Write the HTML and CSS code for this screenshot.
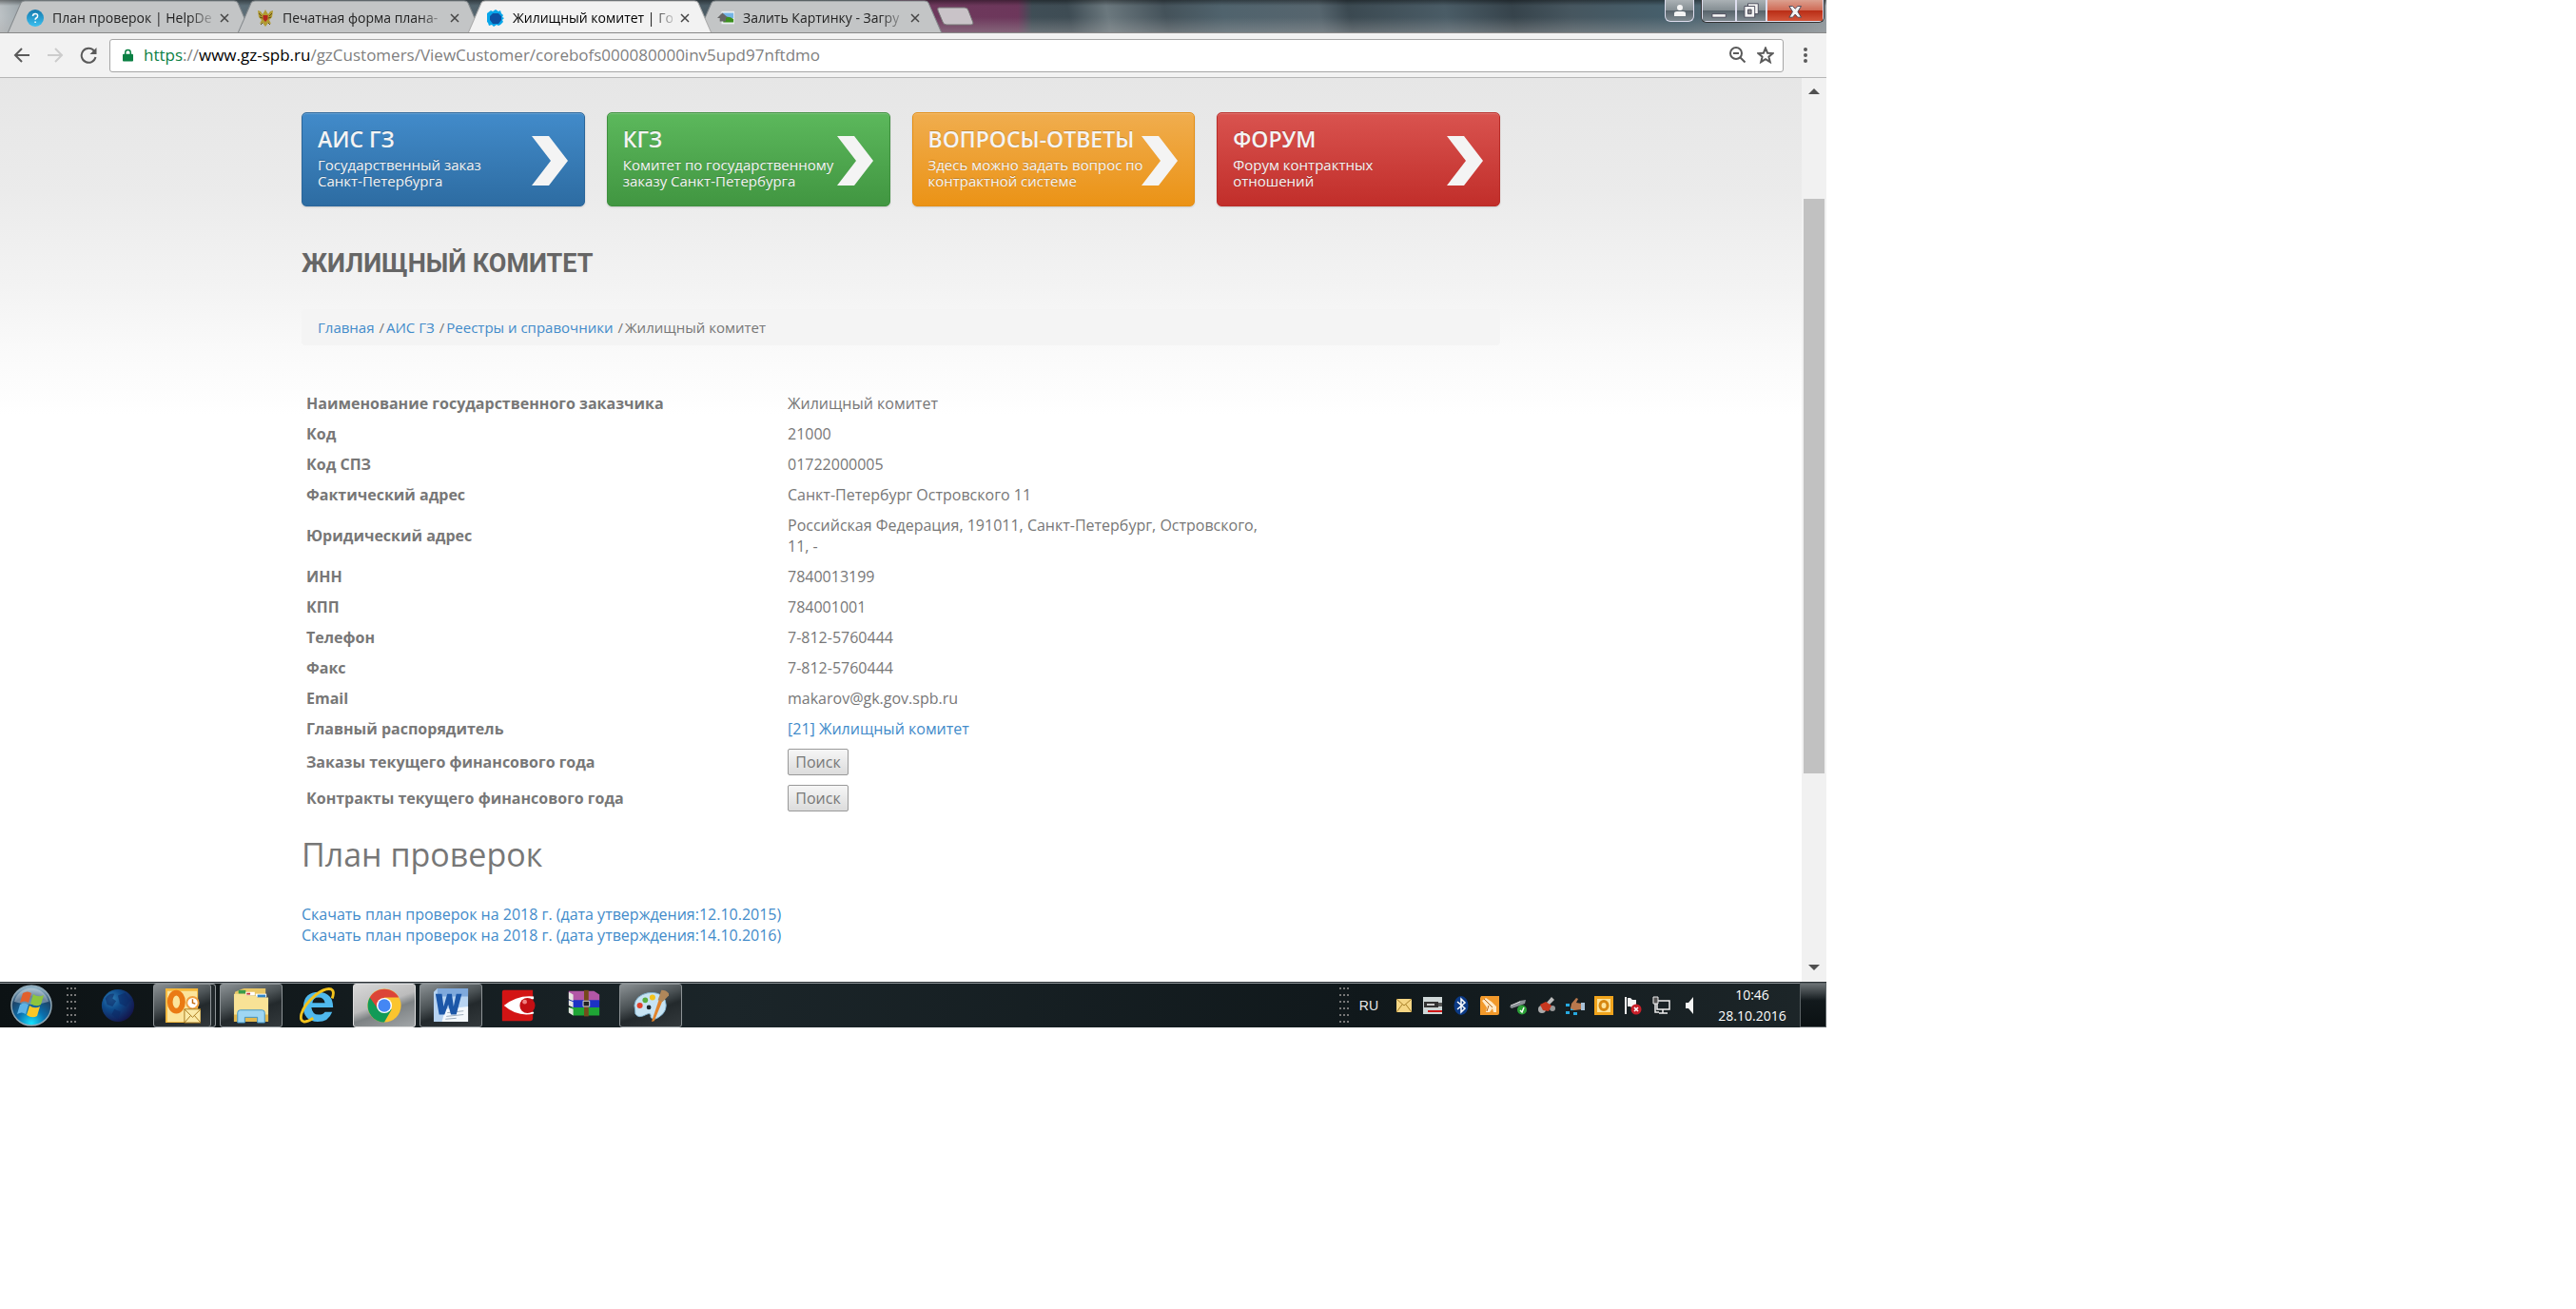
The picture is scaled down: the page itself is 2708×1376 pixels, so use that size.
FILE: index.html
```html
<!DOCTYPE html>
<html lang="ru">
<head>
<meta charset="utf-8">
<title>Жилищный комитет</title>
<link rel="stylesheet" href="styles.css">
</head>
<body>
<div class="screen">
  <header class="tabstrip">
    <nav class="tabs" aria-label="Вкладки">
      <div class="tab">
        <svg class="tab-shape" viewBox="0 0 256 34" preserveAspectRatio="none"><path d="M0 34L14 3Q15 1 18 1H238Q241 1 242 3L256 34" /></svg>
        <svg class="fav" viewBox="0 0 18 18"><defs><linearGradient id="q" x1="0" y1="0" x2="0" y2="1"><stop offset="0" stop-color="#1479ad"/><stop offset="1" stop-color="#3cc0f0"/></linearGradient></defs><circle cx="9" cy="9" r="9" fill="url(#q)"/><path d="M6.5 7q0-2.600 2.600-2.600t2.500 2.300q0 1.500-1.500 2.300-1 .6-1 1.800M9.100 12.400v1.600" fill="none" stroke="#fff" stroke-width="1.500"/></svg>
        <span class="tab-title">План проверок | HelpDe</span>
        <button class="tab-x" aria-label="Закрыть"><svg viewBox="0 0 10 10"><path d="M1 1l8 8M9 1l-8 8"/></svg></button>
      </div>
      <div class="tab">
        <svg class="tab-shape" viewBox="0 0 256 34" preserveAspectRatio="none"><path d="M0 34L14 3Q15 1 18 1H238Q241 1 242 3L256 34" /></svg>
        <svg class="fav" viewBox="0 0 18 18"><path d="M1 1l3 1 2 3 2-3 1-2 1 2 2 3 2-3 3-1-1 7-3 3 2 4-3-1-3 4-3-4-3 1 2-4-3-3z" fill="#b09a32"/><path d="M2 4l3 3M3 8l3 1M16 4l-3 3M15 8l-3 1M4 16l2-2M14 16l-2-2" stroke="#5f4c16"/><path d="M6.500 6h5v4l-2.500 3-2.500-3z" fill="#b3261e"/></svg>
        <span class="tab-title">Печатная форма плана-</span>
        <button class="tab-x" aria-label="Закрыть"><svg viewBox="0 0 10 10"><path d="M1 1l8 8M9 1l-8 8"/></svg></button>
      </div>
      <div class="tab tab-active">
        <svg class="tab-shape" viewBox="0 0 256 34" preserveAspectRatio="none"><path d="M0 34L14 3Q15 1 18 1H238Q241 1 242 3L256 34" /></svg>
        <svg class="fav" viewBox="1 0 18 18"><path d="M5 1l2 1 3-2 3 2 2-1 1 3 2 2-1 2 2 1-2 2 1 2-3 3-2 1-2-1-3 2-2-2-3 1-1-3-2-2 1-2-2-2 2-1 0-3z" fill="#08a6ea"/><path d="M7 4h6l3 3v4l-3 4H7l-3-4V7z" fill="#0c50a2"/></svg>
        <span class="tab-title">Жилищный комитет | Го</span>
        <button class="tab-x" aria-label="Закрыть"><svg viewBox="0 0 10 10"><path d="M1 1l8 8M9 1l-8 8"/></svg></button>
      </div>
      <div class="tab">
        <svg class="tab-shape" viewBox="0 0 256 34" preserveAspectRatio="none"><path d="M0 34L14 3Q15 1 18 1H238Q241 1 242 3L256 34" /></svg>
        <svg class="fav" viewBox="0 0 20 18"><path d="M5 1h15v15H5z" fill="#e9eef0"/><path d="M6 3h13v6H6z" fill="#74b4e6"/><path d="M7 9q6-3 12 1v4H7z" fill="#3c8f1d"/><path d="M6 3l6 5-2 1v4H3V9H0z" fill="#666"/></svg>
        <span class="tab-title">Залить Картинку - Загру</span>
        <button class="tab-x" aria-label="Закрыть"><svg viewBox="0 0 10 10"><path d="M1 1l8 8M9 1l-8 8"/></svg></button>
      </div>
      <button class="newtab" aria-label="Новая вкладка"><svg viewBox="0 0 42 20"><path d="M3 1h27q3 0 4 3l5 13q0 2-2 2H11q-3 0-4-3L2 4Q1 1 3 1z"/></svg></button>
    </nav>
    <div class="winbtns">
      <button class="wb wb-user" aria-label="Профиль"><svg viewBox="0 0 12 12"><circle cx="6" cy="3" r="3"/><path d="M0 12V9q0-2 3-2h6q3 0 3 2v3z"/></svg></button>
      <div class="wb-group">
        <button class="wb wb-min" aria-label="Свернуть"><svg viewBox="0 0 18 20"><path d="M1 14h16v4H1z" stroke="#445"/></svg></button>
        <button class="wb wb-max" aria-label="Развернуть"><svg viewBox="0 0 18 20"><path d="M5 2h12v12H5z" stroke="#445"/><path d="M1 5h12v13H1z" stroke="#445"/><path d="M5 9h4v5H5z" fill="#888" stroke="#445"/></svg></button>
        <button class="wb wb-close" aria-label="Закрыть окно"><svg viewBox="0 0 16 20"><path d="M1 5h4l3 3 3-3h4l-4 6.500 4 6.500h-4l-3-3.500L5 18H1l4-6.500z" stroke="#445"/></svg></button>
      </div>
    </div>
  </header>

  <div class="toolbar">
    <button class="tool" aria-label="Назад"><svg viewBox="0 0 18 18"><path d="M17 9H2M9 2L2 9l7 7"/></svg></button>
    <button class="tool tool-off" aria-label="Вперёд"><svg viewBox="0 0 18 18"><path d="M1 9h15M9 2l7 7-7 7"/></svg></button>
    <button class="tool" aria-label="Обновить"><svg viewBox="0 0 18 18"><path d="M15 4.500A7.500 7.500 0 1 0 16.500 11"/><path d="M17.500 1v7h-7z" fill="#5a5a5a" stroke="none"/></svg></button>
    <div class="omnibox">
      <svg class="lock" viewBox="0 0 12 14"><path d="M1 5.500h10q1 0 1 1V13q0 1-1 1H1q-1 0-1-1V6.500q0-1 1-1z" fill="#0b8043"/><path d="M3 6V4q0-3 3-3t3 3v2" fill="none" stroke="#0b8043" stroke-width="1.600"/></svg>
      <p class="url"><span class="url-s">https</span>://<span class="url-h">www.gz-spb.ru</span>/gzCustomers/ViewCustomer/corebofs000080000inv5upd97nftdmo</p>
      <svg class="omni-ico" viewBox="0 0 18 18"><circle cx="7" cy="7" r="6"/><path d="M4 7h6M11.500 11.500l5 5"/></svg>
      <svg class="omni-ico" viewBox="0 0 18 18"><path d="M9 1.500l2.100 5.200 5.600.4-4.300 3.600 1.400 5.500L9 13.200l-4.800 3 1.400-5.500L1.300 7.100l5.600-.4z"/></svg>
    </div>
    <button class="menu" aria-label="Меню"><svg viewBox="0 0 4 18"><circle cx="2" cy="3" r="2"/><circle cx="2" cy="9" r="2"/><circle cx="2" cy="15" r="2"/></svg></button>
  </div>

  <div class="viewport">
    <main class="page">
      <div class="cards">
        <a class="card card-blue" href="#"><span class="card-title">АИС ГЗ</span><span class="card-text">Государственный заказ<br>Санкт-Петербурга</span><svg class="chev" viewBox="0 0 40 52"><path d="M1 0h18l20 26-20 26H1l20-26z"/></svg></a>
        <a class="card card-green" href="#"><span class="card-title">КГЗ</span><span class="card-text">Комитет по государственному<br>заказу Санкт-Петербурга</span><svg class="chev" viewBox="0 0 40 52"><path d="M1 0h18l20 26-20 26H1l20-26z"/></svg></a>
        <a class="card card-orange" href="#"><span class="card-title">ВОПРОСЫ-ОТВЕТЫ</span><span class="card-text">Здесь можно задать вопрос по<br>контрактной системе</span><svg class="chev" viewBox="0 0 40 52"><path d="M1 0h18l20 26-20 26H1l20-26z"/></svg></a>
        <a class="card card-red" href="#"><span class="card-title">ФОРУМ</span><span class="card-text">Форум контрактных<br>отношений</span><svg class="chev" viewBox="0 0 40 52"><path d="M1 0h18l20 26-20 26H1l20-26z"/></svg></a>
      </div>
      <h1 class="title">ЖИЛИЩНЫЙ КОМИТЕТ</h1>
      <nav class="crumbs" aria-label="Навигация">
        <a href="#">Главная</a><span class="sep">/</span><a href="#">АИС ГЗ</a><span class="sep">/</span><a href="#">Реестры и справочники</a><span class="sep">/</span><span>Жилищный комитет</span>
      </nav>
      <table class="info">
        <tr><th scope="row">Наименование государственного заказчика</th><td>Жилищный комитет</td></tr>
        <tr><th scope="row">Код</th><td>21000</td></tr>
        <tr><th scope="row">Код СПЗ</th><td>01722000005</td></tr>
        <tr><th scope="row">Фактический адрес</th><td>Санкт-Петербург Островского 11</td></tr>
        <tr><th scope="row">Юридический адрес</th><td>Российская Федерация, 191011, Санкт-Петербург, Островского, 11, -</td></tr>
        <tr><th scope="row">ИНН</th><td>7840013199</td></tr>
        <tr><th scope="row">КПП</th><td>784001001</td></tr>
        <tr><th scope="row">Телефон</th><td>7-812-5760444</td></tr>
        <tr><th scope="row">Факс</th><td>7-812-5760444</td></tr>
        <tr><th scope="row">Email</th><td>makarov@gk.gov.spb.ru</td></tr>
        <tr><th scope="row">Главный распорядитель</th><td><a href="#">[21] Жилищный комитет</a></td></tr>
        <tr><th scope="row">Заказы текущего финансового года</th><td><button class="find">Поиск</button></td></tr>
        <tr><th scope="row">Контракты текущего финансового года</th><td><button class="find">Поиск</button></td></tr>
      </table>
      <h2 class="subtitle">План проверок</h2>
      <div class="downloads">
        <a href="#">Скачать план проверок на 2018 г. (дата утверждения:12.10.2015)</a>
        <a href="#">Скачать план проверок на 2018 г. (дата утверждения:14.10.2016)</a>
      </div>
    </main>
    <div class="scrollbar">
      <svg class="arr" viewBox="0 0 12 6"><path d="M0 6l6-6 6 6z"/></svg>
      <div class="track"><div class="thumb"></div></div>
      <svg class="arr" viewBox="0 0 12 6"><path d="M0 0l6 6 6-6z"/></svg>
    </div>
  </div>

  <footer class="taskbar">
    <button class="start" aria-label="Пуск"><svg viewBox="0 0 44 44"><defs><radialGradient id="orb" cx=".5" cy=".95" r=".9"><stop offset="0" stop-color="#16e4ff"/><stop offset=".4" stop-color="#0b6fae"/><stop offset=".75" stop-color="#1d4468"/><stop offset="1" stop-color="#8fb2c6"/></radialGradient></defs><circle cx="22" cy="22" r="21" fill="url(#orb)" stroke="#8fa7b5" stroke-width="1.500"/><path d="M4 18A18.500 18.500 0 0 1 40 18Q22 24 4 18z" fill="#fff" opacity=".35"/><path d="M13 9q5-3 9 0l-3 10q-4-3-9 0z" fill="#e2602c"/><path d="M24 10q5 4 11 1l-3 10q-5 3-11-1z" fill="#8dc53e"/><path d="M10 21q4-3 9 0l-3 10q-4-3-9 0z" fill="#5db2e6"/><path d="M20 22q5 4 11 1l-3 10q-5 3-11-1z" fill="#fbc727"/></svg></button>
    <div class="grip"></div>
    <div class="apps">
      <button class="app" aria-label="Глобус"><svg viewBox="0 0 40 40"><defs><radialGradient id="gl" cx=".3" cy=".3" r=".8"><stop offset="0" stop-color="#2f7fb6"/><stop offset=".4" stop-color="#0e4a8a"/><stop offset="1" stop-color="#141247"/></radialGradient></defs><circle cx="20" cy="20" r="18" fill="url(#gl)"/><path d="M6 12q4-6 10-5l-2 5 4 3-4 6-6-2zM20 9l8-3 6 8-5 7-7-3zM16 24l7 3-3 8-7-5z" fill="#0b2a66" opacity=".6"/></svg></button>
      <button class="app app-open app-stack" aria-label="Outlook"><svg viewBox="0 0 40 40"><path d="M1 1h36v38H1z" fill="#f6b83a"/><path d="M3 4h33v34H3z" fill="#fbe49c"/><ellipse cx="13" cy="16" rx="7" ry="10" fill="none" stroke="#ea7a14" stroke-width="6"/><circle cx="31" cy="17" r="6.500" fill="#fff" stroke="#f0a040" stroke-width="2"/><path d="M31 13v4l3 1" fill="none" stroke="#c46a10" stroke-width="1.500"/><path d="M22 24h18v15H22z" fill="#fbeaa8" stroke="#a8781c"/><path d="M22 24l9 9 9-9M22 39l7-8M40 39l-7-8" fill="none" stroke="#a8781c"/></svg></button>
      <button class="app app-open" aria-label="Проводник"><svg viewBox="0 0 40 40"><path d="M2 5l10-4h24v8H2z" fill="#e9c766"/><path d="M6 3h8v4H6z" fill="#3a9b4a"/><path d="M14 5h10v4H14z" fill="#fff"/><path d="M15 6h4v2h-4z" fill="#c33"/><path d="M25 7h12v4H25z" fill="#fff"/><path d="M27 8h9v3h-9z" fill="#2f84c8"/><path d="M1 7h12l2 2h10l2 2h12v27H1z" fill="#f8e296"/><path d="M1 30h38v8H1z" fill="#e2b84e"/><path d="M5 39V28q0-3 3-3h24q3 0 3 3v11h-8v-6H13v6z" fill="#9fd6f2" stroke="#3f94c4"/></svg></button>
      <button class="app" aria-label="Internet Explorer"><svg viewBox="0 0 40 40"><path d="M37 22H13q1 8 8 8 5 0 7-3h8q-4 11-16 11Q4 37 4 21 5 5 21 5q16 1 16 17zM14 17h14q-1-6-7-6t-7 6z" fill="#4fb9ee"/><path d="M36 12q3-8-1-10-6-2-17 6Q5 19 2 29q-2 8 3 9 4 0 10-4" fill="none" stroke="#f3c31c" stroke-width="3"/></svg></button>
      <button class="app app-open app-lit" aria-label="Chrome"><svg viewBox="0 0 40 40"><circle cx="20" cy="20" r="18.500" fill="#fbc52f"/><path d="M20 20L4 11A18.500 18.500 0 0 0 20 38.500l8-14z" fill="#119a57"/><path d="M4 11A18.500 18.500 0 0 1 36 11H20l-7 13z" fill="#dc4437"/><circle cx="20" cy="20" r="8.500" fill="#fff"/><circle cx="20" cy="20" r="7" fill="#4487f4"/></svg></button>
      <button class="app app-open" aria-label="Word"><svg viewBox="0 0 40 40"><path d="M5 1h34v37H1V5z" fill="#b7d3f1"/><path d="M5 1h34v9H5z" fill="#7fa9dc"/><path d="M14 24l25-3v17H10z" fill="#f4f8fd"/><path d="M16 28l18-2M15 32l19-2M14 35l12-1" stroke="#9ab" /><path d="M3 7h7l2 14 4-14h5l2 14 3-14h6l-6 23h-6l-3-11-4 11H7z" fill="#1c57a8"/></svg></button>
      <button class="app" aria-label="Просмотр"><svg viewBox="0 0 40 40"><path d="M5 3h32v31q0 3-3 3H3V6q0-3 2-3z" fill="#d31414"/><path d="M5 20Q20 8 38 10v3H30v14h8v2Q20 33 5 20z" fill="#fff"/><circle cx="31" cy="20" r="8.500" fill="#c40f14"/><circle cx="28" cy="16" r="2.500" fill="#f08080"/></svg></button>
      <button class="app" aria-label="WinRAR"><svg viewBox="0 0 40 40"><path d="M3 4h28l6 4v7H8L3 12z" fill="#b257a6"/><path d="M3 14h34v8H8L3 19z" fill="#1c32c4"/><path d="M3 22h34v9H8l-5-4z" fill="#1fa535"/><path d="M3 5l5 3v7l-5-2zM3 14l5 2v6l-5-2zM3 22l5 2v7l-5-3z" fill="#e6e6e0"/><path d="M20 3h5v29h-5z" fill="#744a1c"/><path d="M19 15h7v6h-7z" fill="#222" stroke="#ddd"/></svg></button>
      <button class="app app-open" aria-label="Paint"><svg viewBox="0 0 40 40"><path d="M17 6q14-2 19 8 4 12-7 19-6 4-9 0 1-6-5-3-9 5-12-1 0-5-1-9Q3 9 17 6z" fill="#c7e3f3" stroke="#7fb0cc"/><circle cx="8" cy="20" r="3.200" fill="#e2422c"/><circle cx="14" cy="14" r="3" fill="#59ad3f"/><circle cx="22" cy="11" r="3.200" fill="#f2c21d"/><circle cx="18" cy="22" r="2.500" fill="#1e2a30"/><path d="M21 38l8-24 4 1-9 22z" fill="#e0832c"/><path d="M28 14l4-11q6 0 9 5l-8 8z" fill="#b0875a"/></svg></button>
    </div>
    <div class="tray">
      <div class="grip"></div>
      <span class="lang">RU</span>
      <div class="tray-icons">
        <svg viewBox="0 0 20 20"><path d="M2 3h16v14H2z" fill="#f5d684"/><path d="M2 3l8 7 8-7M2 17l6-8M18 17l-6-8" fill="none" stroke="#a77f27"/></svg>
        <svg viewBox="0 0 20 20"><path d="M0 1h20v18H0z" fill="#cfd8d8"/><path d="M1 6h15v6H1z" fill="#333"/><path d="M4 8h8v2H4z" fill="#ccc"/><path d="M16 7h4v4h-4z" fill="#555"/><path d="M5 15h15v2H5z" fill="#d01818"/></svg>
        <svg viewBox="0 0 20 20"><ellipse cx="10" cy="10" rx="7.500" ry="10" fill="#0b3a86"/><path d="M6 6l8 7-4 4V3l4 4-8 7" fill="none" stroke="#fff" stroke-width="1.500"/></svg>
        <svg viewBox="0 0 20 20"><path d="M1 0h19v18q0 2-2 2H0V2z" fill="#f2992b"/><path d="M2 5l4-3 6 4 5 5v6h-3l-1-4-3 4H6l1-5z" fill="#ffe9c8"/><path d="M4 3l9 9M9 10l-2 6" stroke="#b5651a"/></svg>
        <svg viewBox="0 0 20 20"><path d="M1 11L12 5l6-1-1 4-8 3-6 2z" fill="#8a9096"/><path d="M2 10l10-4" stroke="#ddd"/><circle cx="14" cy="14.500" r="5" fill="#2ba037"/><path d="M12 15l2 2 2-5" fill="none" stroke="#fff" stroke-width="1.500"/></svg>
        <svg viewBox="0 0 20 20"><path d="M9 8l6-7 3 3-6 6z" fill="#bbb"/><circle cx="5" cy="14" r="4" fill="#aaa"/><circle cx="16" cy="13" r="3" fill="#999"/><path d="M3 9l6-3 6 4-3 6-6-1z" fill="#c8371f"/></svg>
        <svg viewBox="0 0 20 20"><path d="M0 8h4v3H0zM5 12h4v3H5zM0 16h4v3H0zM8 17h4v3H8z" fill="#26a9e0"/><path d="M6 8l5-6 2 1-2 4 6 1v6l-8 1-4-2z" fill="#b9784c"/><path d="M16 7h4v8h-4z" fill="#a8c2d8"/></svg>
        <svg viewBox="0 0 20 20"><path d="M0 0h20v20H0z" fill="#f0a41c"/><path d="M3 3h14v14H3z" fill="#fde39a"/><ellipse cx="10" cy="10" rx="4" ry="4.500" fill="none" stroke="#d6860f" stroke-width="3"/></svg>
        <svg viewBox="0 0 20 20"><path d="M2 1h2v18H2zM5 2h3l2 2h4v8h-5l-1-1H5z" fill="#f4f4f4"/><circle cx="14" cy="14" r="5.500" fill="#c9202a"/><path d="M12 12l4 4M16 12l-4 4" stroke="#fff" stroke-width="1.600"/></svg>
        <svg viewBox="0 0 20 20"><path d="M6 5h13v9H6z" fill="#1a2226" stroke="#eee" stroke-width="1.500"/><path d="M12 14v4M8 18h9M4 8v9h4" stroke="#eee" stroke-width="1.500" fill="none"/><path d="M2 1h5v7H2z" fill="#555" stroke="#eee"/></svg>
        <svg viewBox="0 0 20 20"><path d="M6 7h3l5-6v18l-5-6H6z" fill="#f4f4f4"/></svg>
      </div>
      <div class="clock"><span>10:46</span><span>28.10.2016</span></div>
      <button class="desk" aria-label="Свернуть все окна"></button>
    </div>
  </footer>
</div>
</body>
</html>
```

FILE: styles.css
```css
* { box-sizing: border-box; }
body { margin: 0; background: #fff; color: #777; font: 16px/22px "Open Sans", "Noto Sans", sans-serif; }
button { margin: 0; padding: 0; border: 0; background: none; font: inherit; color: inherit; }
a { color: #428bca; text-decoration: none; }
svg { display: block; flex: none; }
.screen { max-width: 1920px; display: flex; flex-direction: column; }

/* window frame */
.tabstrip { display: flex; justify-content: space-between; height: 35px; padding-left: 8px; overflow: hidden; border-bottom: 1px solid #888;
  background:
    linear-gradient(#0006, #0000 6px, #0000 18px, #a8a8a866),
    linear-gradient(90deg, #0000 930px, #78315ccc 945px, #78315ccc 1070px, #0000 1085px),
    linear-gradient(80deg, #c0c5c8 0, #8c989e 40px, #5c6d76 260px, #46565f 900px, #3e4c54 1110px, #6b787e 1150px, #44525a 1210px, #50636d 1270px, #56656e 1370px, #3b4951 1400px, #4a5c66 1500px, #36434b 1570px, #46565f 1630px, #46606d 1740px, #5d6f79 1800px, #a0a6aa 1920px); }
.tabs { display: flex; }
.tab { position: relative; display: flex; align-items: center; width: 256px; height: 35px; margin-right: -14px; padding: 2px 0 0 20px; color: #222; font: 14px/20px "Open Sans", "Noto Sans", sans-serif; }
.tab-shape { position: absolute; inset: 0; z-index: 0; width: 256px; height: 35px; fill: #c3c5c6; stroke: #84898c; }
.tab-active { z-index: 2; color: #000; }
.tab-active .tab-shape { fill: #f2f2f2; stroke: #aaa; }
.fav { position: relative; width: 18px; height: 18px; }
.tab-title { position: relative; width: 168px; margin-left: 9px; white-space: nowrap; mask-image: linear-gradient(90deg, #000 144px, #0003 168px); }
.tab-x { position: relative; margin-left: 8px; }
.tab-x svg { width: 10px; height: 10px; stroke: #444; stroke-width: 1.5; }
.newtab { margin: 0 0 0 8px; }
.newtab svg { width: 42px; height: 20px; fill: #c9c3c8; stroke: #777; }
.winbtns { display: flex; align-items: flex-start; gap: 7px; padding-right: 2px; }
.wb { display: grid; place-items: center; height: 23px; background: linear-gradient(#aab1b5, #848d92 50%, #56626a 50%, #7f8a90); border: 1px solid #dde; border-top: 0; }
.wb svg { height: 18px; fill: #f4f4f4; }
.wb-user { width: 31px; border-radius: 0 0 6px 6px; }
.wb-user svg { height: 12px; }
.wb-group { display: flex; border: 1px solid #333; border-top: 0; border-radius: 0 0 6px 6px; overflow: hidden; }
.wb-min { width: 36px; }
.wb-max { width: 32px; }
.wb-close { width: 60px; background: linear-gradient(#dca08f, #cf6a55 50%, #b92c15 50%, #d2553a); }

/* toolbar */
.toolbar { display: flex; align-items: center; height: 47px; padding: 0 20px 0 14px; background: #f2f2f2; border-bottom: 1px solid #b6b6b6; }
.tool { margin-right: 17px; }
.tool svg { width: 18px; height: 18px; fill: none; stroke: #5a5a5a; stroke-width: 2; }
.tool-off svg { stroke: #ccc; }
.omnibox { flex: 1; display: flex; align-items: center; gap: 11px; height: 35px; margin-right: 21px; margin-left: -4px; padding: 0 9px 0 13px; background: #fff; border: 1px solid #a6a6a6; border-radius: 3px; }
.lock { width: 11px; height: 14px; }
.url { flex: 1; margin: 0; color: #808080; font: 17px/24px "Open Sans", "Noto Sans", sans-serif; white-space: nowrap; }
.url-s { color: #0b8043; }
.url-h { color: #000; }
.omni-ico { width: 18px; height: 18px; fill: none; stroke: #5a5a5a; stroke-width: 2; }
.menu svg { width: 4px; height: 18px; fill: #5a5a5a; }

/* site */
.viewport { display: flex; background: linear-gradient(#e6e6e6, #ebebeb 120px, #f3f3f3 220px, #fafafa 290px, #fff 355px); }
.page { flex: 1; max-width: 1260px; margin: 0 auto; padding: 36px 0 38px; }
.cards { display: grid; grid-template-columns: repeat(4, 1fr); gap: 23px; }
.card { position: relative; display: flex; flex-direction: column; height: 99px; padding: 14px 16px; border: 1px solid; border-radius: 5px; color: #f4f4f4; box-shadow: inset 0 1px 0 #fff3, 0 1px 2px #0002; text-shadow: 0 -1px 0 #0003; }
.card-title { font-size: 23px; line-height: 26px; font-weight: 600; margin-bottom: 6px; white-space: nowrap; }
.card-text { font-size: 15px; line-height: 17px; white-space: nowrap; }
.card-blue { background: linear-gradient(#428bca, #2d6ca2); border-color: #2b669a; }
.card-green { background: linear-gradient(#5cb85c, #419641); border-color: #3e8f3e; }
.card-orange { background: linear-gradient(#f0ad4e, #eb9316); border-color: #e38d13; }
.card-red { background: linear-gradient(#d9534f, #c12e2a); border-color: #b92c28; }
.chev { position: absolute; right: 16px; top: 24px; width: 40px; height: 52px; fill: #f4f4f4; }
.title { margin: 43px 0 0; color: #666; font: bold 27px/34px Roboto, "Open Sans", sans-serif; }
.crumbs { display: flex; height: 38px; margin-top: 31px; padding: 8px 17px; background: #f4f4f4; border-radius: 4px; font-size: 15px; }
.sep { margin: 0 2px 0 5px; }
.info { width: 1020px; margin-top: 45px; border-collapse: collapse; }
.info th { width: 506px; padding: 5px; text-align: left; font-weight: bold; }
.info td { padding: 5px; }
.find { display: block; width: 64px; height: 28px; border: 1px solid #999; border-radius: 2px; background: linear-gradient(#f6f6f6, #dcdcdc); }
.subtitle { margin: 18px 0 0; font-size: 34px; line-height: 44px; font-weight: 400; }
.downloads { display: flex; flex-direction: column; align-items: flex-start; margin-top: 30px; }
.scrollbar { display: flex; flex-direction: column; align-items: center; width: 26px; padding: 11px 0 12px; background: #f1f1f1; }
.arr { width: 12px; height: 6px; fill: #505050; }
.track { flex: 1; width: 22px; padding-top: 110px; }
.thumb { height: 75%; background: #c1c1c1; }

/* taskbar */
.taskbar { display: flex; align-items: center; height: 48px; padding-left: 11px; border-top: 1px solid #2c3236; box-shadow: inset 0 1px 0 #8a9094; background: linear-gradient(90deg, #0c1214, #1b2529 40%, #10181b 75%, #1d2629); }
.start svg { width: 44px; height: 44px; }
.grip { width: 10px; height: 38px; margin-left: 15px; background: radial-gradient(circle at 1px 1px, #777 1px, #0000 1px) 0 0 / 4px 7px; }
.apps { display: flex; gap: 4px; margin-left: 11px; }
.app { display: grid; place-items: center; width: 66px; height: 46px; }
.app svg { width: 38px; height: 38px; }
.app-open { border: 1px solid #8d9396; border-radius: 3px; background: linear-gradient(160deg, #8b9194, #4c5356 40%, #23292c 60%, #33393c); }
.app-stack { padding-right: 5px; box-shadow: inset -4px 0 0 #22292c, inset -5px 0 0 #8d9396; }
.app-lit { border-color: #ddd; background: linear-gradient(160deg, #d8d8d8, #bcbcbc 45%, #7d8284 60%, #a2a6a8); }
.tray { display: flex; align-items: center; margin-left: auto; }
.lang { margin-left: 11px; color: #e8e8e8; font: 14px/20px "Liberation Sans", Arial, sans-serif; }
.tray-icons { display: flex; gap: 10px; margin-left: 17px; }
.tray-icons svg { width: 20px; height: 20px; }
.clock { display: flex; flex-direction: column; width: 100px; margin-left: 6px; text-align: center; color: #fff; font: 14px/22px "Open Sans", "Noto Sans", sans-serif; }
.desk { width: 28px; height: 47px; border: 1px solid #5c6366; background: linear-gradient(#6c7275, #12191c 40%, #0b1113); }
```
